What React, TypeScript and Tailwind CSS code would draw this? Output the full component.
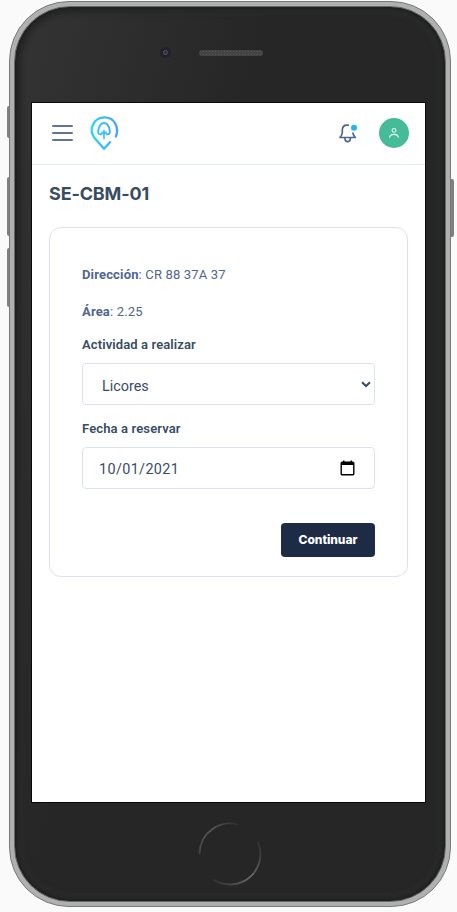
import React from "react";

function Logo() {
  return (
    <svg width="30" height="36" viewBox="0 0 30 36" fill="none" strokeLinecap="round" strokeLinejoin="round">
      <defs>
        <linearGradient id="pin" x1="0" y1="0" x2="30" y2="0" gradientUnits="userSpaceOnUse">
          <stop offset="0" stopColor="#22dcf3" />
          <stop offset="1" stopColor="#4f9dff" />
        </linearGradient>
      </defs>
      <g stroke="url(#pin)">
        <path d="M26.8 21.5C30.3 13.5 26.3 2.3 15.5 2.3C4.7 2.3-.4 14.3 4.9 22.2L15 33.8L21 27.2" strokeWidth="2.3" />
        <path d="M12.5 19.2H11C8.6 19.2 8.9 16.4 9.6 13.8C10.5 10.8 12.2 8 15 8C17.8 8 19.5 10.8 20.4 13.8C21.1 16.4 21.4 19.2 19 19.2H17.5" strokeWidth="1.9" />
        <path d="M15 15.4V23.6M12.9 17.2L15 19.2L17.1 17.2" strokeWidth="1.6" />
      </g>
    </svg>
  );
}

function Bell() {
  return (
    <svg width="20" height="20" viewBox="0 0 20 20" fill="none" stroke="#506690" strokeWidth="1.7" strokeLinecap="round" strokeLinejoin="round">
      <path d="M10.2 2.2H8.7C6 2.2 4.3 4.3 4.3 7V9.5C4.3 11.5 3.4 12.8 2 14.5H17.3C16 13.2 15.3 11.8 14.9 10" />
      <path d="M6.9 15.2C7 19.7 12.3 19.7 12.4 15.2" />
      <circle cx="16" cy="4.7" r="3" fill="#23b7e5" stroke="none" />
    </svg>
  );
}

function Header() {
  return (
    <header className="flex h-[62px] shrink-0 items-center border-b border-[#e3ebf6] pb-px pl-5 pr-4">
      <div className="flex w-[21px] flex-col gap-[5px]">
        <span className="h-[2px] rounded bg-[#637493]" />
        <span className="h-[2px] rounded bg-[#637493]" />
        <span className="h-[2px] rounded bg-[#637493]" />
      </div>
      <div className="ml-4">
        <Logo />
      </div>
      <div className="ml-auto">
        <Bell />
      </div>
      <div className="ml-[21px] flex size-[30px] items-center justify-center rounded-full bg-[#45bb98]">
        <svg width="12" height="12" viewBox="0 0 12 12" fill="none" stroke="#e6fff7" strokeWidth="1.1" strokeLinecap="round">
          <circle cx="6" cy="3.4" r="1.9" />
          <path d="M1.7 10.3C2.2 6.4 9.8 6.4 10.3 10.3" />
        </svg>
      </div>
    </header>
  );
}

function ReservationCard() {
  return (
    <section className="ml-[17px] mt-[21px] flex h-[350px] w-[359px] flex-col rounded-[12px] border border-[#dfe2ee] px-8 text-[13px] leading-5 text-[#506690]">
      <p className="mt-[37px] tracking-[0.16px]"><b className="font-bold">Dirección</b>: CR 88 37A 37</p>
      <p className="mt-[17px] tracking-[0.16px]"><b className="font-bold">Área</b>: 2.25</p>
      <p className="mt-[13px] font-semibold tracking-[0.11px] text-[#384c62]">Actividad a realizar</p>
      <div className="mt-[8px] flex h-[42px] shrink-0 items-center justify-between rounded-[4px] border border-[#dce2ee] pl-[19px] pr-[3px] text-[14.4px] text-[#384c62]">
        <span className="pt-[5px]">Licores</span>
        <svg width="10" height="7" viewBox="0 0 10 7" fill="none" stroke="#384c62" strokeWidth="2">
          <path d="M1 1.2L5 5L9 1.2" />
        </svg>
      </div>
      <p className="mt-[14px] font-semibold tracking-[0.13px] text-[#384c62]">Fecha a reservar</p>
      <div className="mt-[8px] flex h-[42px] shrink-0 items-center justify-between rounded-[4px] border border-[#dce2ee] pl-4 pr-[19px] text-[14.4px] text-[#384c62]">
        <span className="pt-[4px] tracking-[0.36px]">10/01/2021</span>
        <svg width="15" height="16" viewBox="0 0 15 16" fill="none">
          <rect x="1.2" y="2.2" width="12.6" height="12.6" rx="1" stroke="#000" strokeWidth="1.4" />
          <path d="M1 2H14V5H1ZM3 .5H4.5V3H3ZM10.5 .5H12V3H10.5Z" fill="#000" />
        </svg>
      </div>
      <button className="mt-[34px] h-[34px] w-[94px] self-end rounded-[4px] bg-[#1d2b45] font-[Inter,sans-serif] text-[12px] font-extrabold tracking-[-0.05px] text-white">
        Continuar
      </button>
    </section>
  );
}

export default function App() {
  return (
    <div className="relative h-[912px] w-[457px] overflow-hidden bg-[#fafafa] font-[Roboto,sans-serif]">
      <span className="absolute left-[7px] top-[106px] h-8 w-1 rounded-l-[2px] bg-[#808080]" />
      <span className="absolute left-[7px] top-[177px] h-[59px] w-1 rounded-l-[2px] bg-[#808080]" />
      <span className="absolute left-[7px] top-[248px] h-[59px] w-1 rounded-l-[2px] bg-[#808080]" />
      <span className="absolute left-[450px] top-[179px] h-[58px] w-1 rounded-r-[2px] bg-[#808080]" />
      <div className="relative ml-[9px] h-[907px] w-[442px] pt-px">
        <div className="h-[906px] rounded-[60px] border border-[#777b78] bg-[#b0b0b0] p-[4px]">
          <div className="flex h-full flex-col rounded-[56px] border border-[#686868] bg-[linear-gradient(105deg,#343434_0%,#262626_38%,#262626_100%)] shadow-[inset_0_0_4px_2px_#1b1d1d,inset_0_0_4px_8px_#2b2b2b]">
            <div className="relative h-[96px] shrink-0">
              <span className="absolute left-[145px] top-[40px] flex size-[11px] items-center justify-center rounded-full bg-[#24212d]">
                <span className="size-[5px] rounded-full border border-[#55545f] bg-[#302d3a]" />
              </span>
              <span className="absolute left-[184px] top-[43px] h-[6px] w-[64px] rounded-full bg-[#444] bg-[radial-gradient(circle,#555_0.7px,transparent_0.9px)] bg-[length:3px_3px]" />
            </div>
            <main className="ml-[17px] flex h-[699px] w-[393px] shrink-0 flex-col bg-white shadow-[0_0_0_1px_#090909]">
              <Header />
              <h1 className="ml-[17px] mt-[17px] font-[Inter,sans-serif] text-[18px] font-bold leading-[24px] tracking-[-0.15px] text-[#384c62]">SE-CBM-01</h1>
              <ReservationCard />
            </main>
            <div className="flex justify-center pt-[20px]">
              <svg width="64" height="64" viewBox="0 0 64 64" fill="none" strokeWidth="1.8" strokeLinecap="round">
                <defs>
                  <linearGradient id="homeTop" x1="0" y1="32" x2="44" y2="0" gradientUnits="userSpaceOnUse">
                    <stop stopColor="#444" /><stop offset=".5" stopColor="#555" /><stop offset="1" stopColor="#262626" />
                  </linearGradient>
                  <linearGradient id="homeBottom" x1="14" y1="60" x2="62" y2="20" gradientUnits="userSpaceOnUse">
                    <stop stopColor="#303030" /><stop offset=".5" stopColor="#6a6a6a" /><stop offset="1" stopColor="#303030" />
                  </linearGradient>
                </defs>
                <path d="M1.5 31A30.5 30.5 0 0 1 40 2.5" stroke="url(#homeTop)" />
                <path d="M60 20A30.5 30.5 0 0 1 16 58" stroke="url(#homeBottom)" />
              </svg>
            </div>
          </div>
        </div>
      </div>
    </div>
  );
}
